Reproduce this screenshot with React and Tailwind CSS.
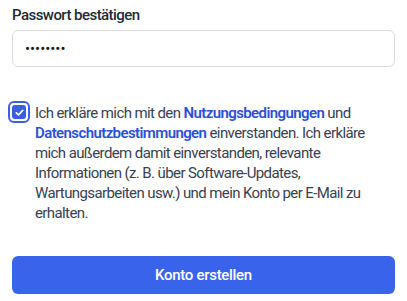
import React, { useState } from "react";

const App = () => {
  const [password, setPassword] = useState("passwort");
  const [agreed, setAgreed] = useState(true);

  return (
    <div className="w-[407px] h-[301px] bg-white px-3 pt-[5px] font-['Roboto',sans-serif]">
      <label className="block text-[15px] leading-[20px] font-medium tracking-[-0.55px] text-[#1f2937]">
        Passwort bestätigen
      </label>
      <input
        type="password"
        value={password}
        onChange={(e) => setPassword(e.target.value)}
        className="mt-[5px] w-full h-[37px] px-3 border border-[#d9dce1] rounded-md text-[15px] text-[#111827] outline-none"
      />

      <div className="flex items-start gap-[5px] mt-[36px]">
        <button
          type="button"
          onClick={() => setAgreed(!agreed)}
          className="mt-[-2px] ml-[-4px] shrink-0 w-[22px] h-[22px] rounded-[6px] border-2 border-[#3b5fe0] p-[2px]"
        >
          <span className="flex items-center justify-center w-full h-full rounded-[3px] bg-[#3b5fe0]">
            {agreed && (
              <svg width="11" height="11" viewBox="0 0 12 12" fill="none">
                <path d="M2.5 6.3 L5 8.6 L9.6 3.6" stroke="white" strokeWidth="1.8" strokeLinecap="round" strokeLinejoin="round" />
              </svg>
            )}
          </span>
        </button>
        <p className="text-[15px] leading-[20px] tracking-[-0.6px] text-[#374151]">
          Ich erkläre mich mit den{" "}
          <a href="#" className="font-semibold text-[#2b50d6]">Nutzungsbedingungen</a> und{" "}
          <a href="#" className="font-semibold text-[#2b50d6]">Datenschutzbestimmungen</a> einverstanden. Ich erkläre
          <br />
          mich außerdem damit einverstanden, relevante
          <br />
          Informationen (z. B. über Software-Updates,
          <br />
          Wartungsarbeiten usw.) und mein Konto per E-Mail zu
          <br />
          erhalten.
        </p>
      </div>

      <button
        type="submit"
        className="mt-[33px] w-full h-[38px] rounded-md bg-[#3a63eb] text-white text-[15px] font-medium tracking-[-0.3px]"
      >
        Konto erstellen
      </button>
    </div>
  );
};

export default App;
